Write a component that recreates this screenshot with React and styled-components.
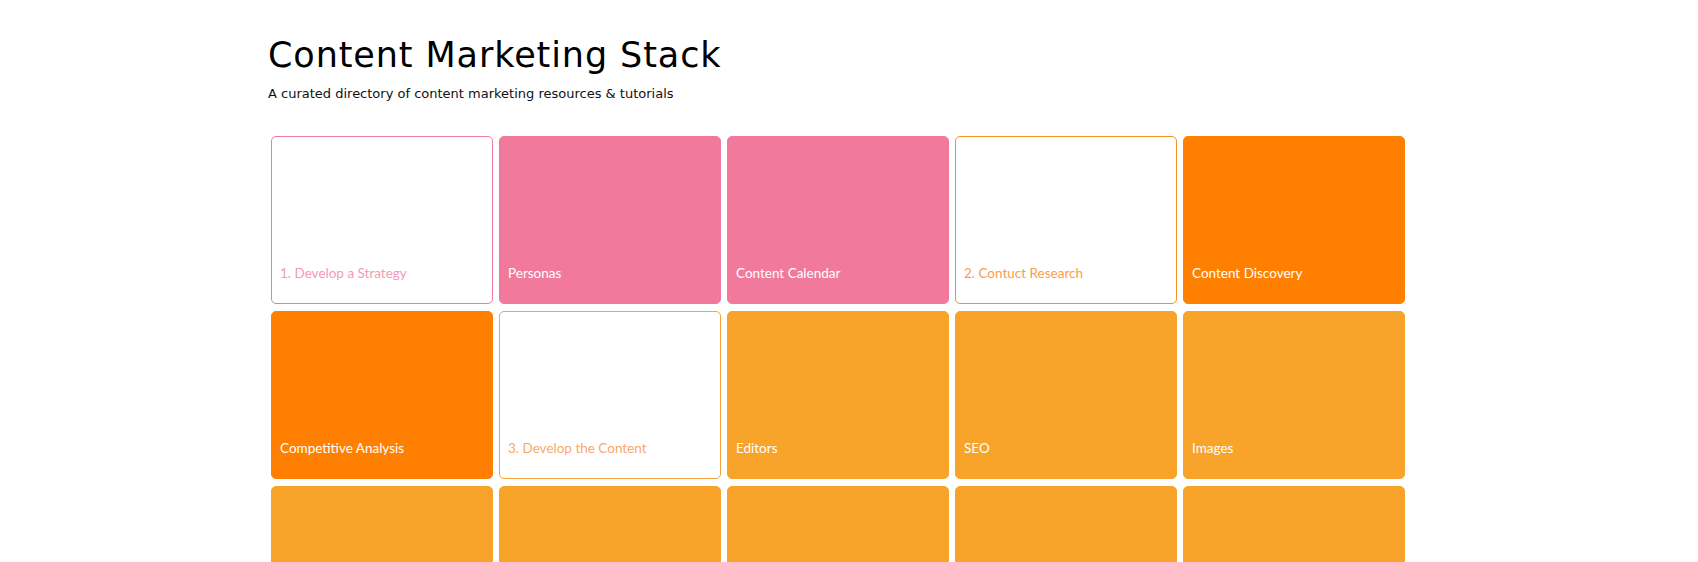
import React from 'react';
import styled, { createGlobalStyle } from 'styled-components';

const GlobalStyle = createGlobalStyle`
  body {
    margin: 0;
    background: #ffffff;
    font-family: "Open Sans", "Liberation Sans", sans-serif;
  }
`;

const colors = {
  pink: '#f17a9c',
  orange: '#ff8000',
  amber: '#f8a329',
  white: '#ffffff',
};

const Page = styled.div`
  height: 562px;
  overflow: hidden;
  padding-left: 268px;
`;

const Header = styled.header`
  padding-top: 33px;
  margin-bottom: 33px;
`;

const Title = styled.h1`
  margin: 0;
  font-family: "DejaVu Sans", sans-serif;
  font-weight: normal;
  font-size: 35px;
  line-height: 44px;
  color: #000;
  letter-spacing: 0.9px;
`;

const Subtitle = styled.p`
  margin: 8px 0 0;
  font-family: "DejaVu Sans", sans-serif;
  font-size: 13px;
  line-height: 18px;
  color: #111;
`;

const Grid = styled.div`
  display: grid;
  grid-template-columns: repeat(5, 222px);
  grid-auto-rows: 168px;
  gap: 7px 6px;
  padding-left: 3px;
`;

const Tile = styled.a`
  display: flex;
  align-items: flex-end;
  box-sizing: border-box;
  padding: 0 8px 22px;
  border-radius: 5px;
  text-decoration: none;
  font-family: "Lato", "Open Sans", sans-serif;
  font-size: 13.5px;
  background: ${p => (p.$outline ? colors.white : p.$color)};
  border: 1px solid ${p => p.$color};
  color: ${p => (p.$outline ? p.$text : colors.white)};
`;

const tiles = [
  { label: '1. Develop a Strategy', color: '#ef7a9c', outline: true, text: '#f49ab4' },
  { label: 'Personas', color: colors.pink },
  { label: 'Content Calendar', color: colors.pink },
  { label: '2. Contuct Research', color: '#f7931e', outline: true, text: '#fa9d4c' },
  { label: 'Content Discovery', color: colors.orange },
  { label: 'Competitive Analysis', color: colors.orange },
  { label: '3. Develop the Content', color: '#f6a43c', outline: true, text: '#f9a86a' },
  { label: 'Editors', color: colors.amber },
  { label: 'SEO', color: colors.amber },
  { label: 'Images', color: colors.amber },
  { label: '', color: colors.amber },
  { label: '', color: colors.amber },
  { label: '', color: colors.amber },
  { label: '', color: colors.amber },
  { label: '', color: colors.amber },
];

export default function App() {
  return (
    <>
      <GlobalStyle />
      <Page>
        <Header>
          <Title>Content Marketing Stack</Title>
          <Subtitle>A curated directory of content marketing resources &amp; tutorials</Subtitle>
        </Header>
        <Grid>
          {tiles.map((t, i) => (
            <Tile key={i} href="#" $color={t.color} $outline={t.outline} $text={t.text}>
              {t.label}
            </Tile>
          ))}
        </Grid>
      </Page>
    </>
  );
}
